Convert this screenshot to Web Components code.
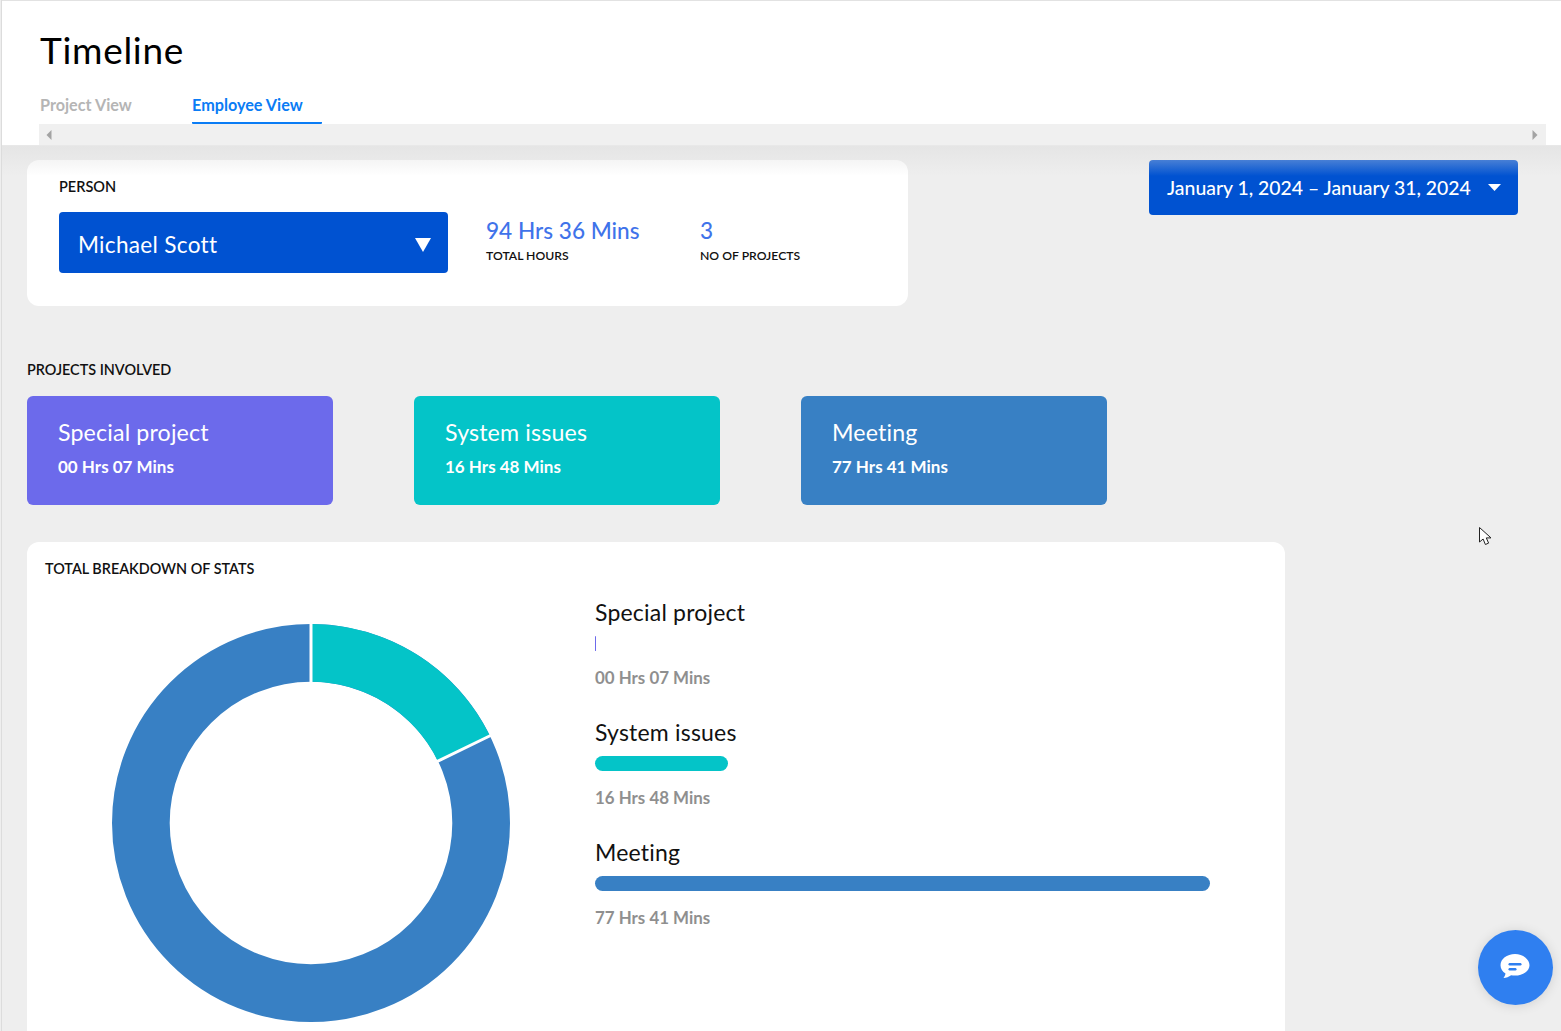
<!DOCTYPE html>
<html><head><meta charset="utf-8"><style>
html,body{margin:0;padding:0;height:1031px;overflow:hidden;background:#eee}
body{font-family:Lato,"Noto Sans",sans-serif;color:#111}
</style></head><body>
<tl-app></tl-app>
<script>
function def(name, html){
  customElements.define(name, class extends HTMLElement{
    constructor(){super();this.attachShadow({mode:'open'}).innerHTML=html(this)}
  });
}
def('tl-header',()=>`<style>
:host{display:block;background:#fff;height:144px;border-top:1px solid #e2e2e2;border-bottom:1px solid #e8e8e8;padding-left:37px;padding-right:15px}
h1{margin:0 0 0 1px;padding-top:26px;height:45px;font:400 37px/45px Lato,sans-serif;letter-spacing:.7px;color:#000}
.tabs{display:flex;margin-top:20px;height:32px;box-sizing:border-box;padding-left:1px}
.tab{font:700 16.2px/26px Lato,sans-serif;height:32px;box-sizing:border-box;white-space:nowrap}
.a{color:#b5b5b5;width:152px}
.b{color:#0a7cf5;border-bottom:2px solid #0a7cf5;width:130px;border-radius:0 0 1px 1px}
.bar{height:21px;background:#f0f0f0;display:flex;justify-content:space-between;align-items:center;padding:0 8px 0 7px}
svg{display:block}
</style><h1>Timeline</h1><div class="tabs"><div class="tab a">Project View</div><div class="tab b">Employee View</div></div>
<div class="bar"><svg width="6" height="10"><path d="M5.500 0v10L.5 5z" fill="#a3a3a3"/></svg><svg width="6" height="10"><path d="M.5 0v10L5.500 5z" fill="#a3a3a3"/></svg></div>`);
def('tl-stat',e=>`<style>
:host{display:block}
.v{font:500 22.6px/28px Lato,sans-serif;color:#3f73ea}
.l{font:600 12.2px/16px Lato,sans-serif;color:#111;margin-top:3px}
</style><div class="v"><slot name="v"></slot></div><div class="l"><slot name="l"></slot></div>`);
def('tl-person',()=>`<style>
:host{display:block;width:881px;height:146px;background:#fff;border-radius:12px;box-sizing:border-box;padding:18px 32px 0;position:relative}
.p{font:600 14.5px/18px Lato,sans-serif;color:#111}
.r{display:flex;margin-top:16px}
.sel{width:389px;height:61px;background:#0052d1;border-radius:4px;color:#fff;display:flex;align-items:center;justify-content:space-between;padding:4px 17px 0 19px;box-sizing:border-box;font:400 22.6px/30px Lato,sans-serif;letter-spacing:.3px}
.st{display:flex;margin-left:38px;padding-top:5px}
tl-stat:first-child{width:214px}
</style><div class="p">PERSON</div><div class="r"><div class="sel"><span>Michael Scott</span><svg width="16" height="15"><path d="M0 1h16L8 15z" fill="#fff"/></svg></div>
<div class="st"><tl-stat><span slot="v">94 Hrs 36 Mins</span><span slot="l">TOTAL HOURS</span></tl-stat><tl-stat><span slot="v">3</span><span slot="l">NO OF PROJECTS</span></tl-stat></div></div>`);
def('tl-date',()=>`<style>
:host{display:flex;width:369px;height:55px;background:#0052d1;border-radius:4px;color:#fff;align-items:center;justify-content:space-between;padding:0 17px 0 18px;box-sizing:border-box;font:500 19.4px/26px Lato,sans-serif;white-space:nowrap}
svg{display:block}
</style><span>January 1, 2024 – January 31, 2024</span><svg width="13" height="7"><path d="M0 0h13L6.500 7z" fill="#fff"/></svg>`);
def('tl-card',e=>`<style>
:host{display:block;width:306px;height:109px;border-radius:6px;color:#fff;background:${e.getAttribute('color')};box-sizing:border-box;padding:22px 31px}
.t{font:400 23.2px/29px Lato,sans-serif;letter-spacing:.15px}
.s{font:700 17px/20px Lato,sans-serif;margin-top:10px}
</style><div class="t">${e.getAttribute('name')}</div><div class="s">${e.getAttribute('time')}</div>`);
def('tl-meter',e=>`<style>
:host{display:block;height:120px}
.t{font:400 23px/28px Lato,sans-serif;color:#111;letter-spacing:.2px}
.track{height:15px;margin-top:10px;display:flex}
.b{height:15px;border-radius:8px;width:${e.getAttribute('w')}px;background:${e.getAttribute('color')}}
.s{font:700 16.9px/20px Lato,sans-serif;color:#8f8f8f;margin-top:17px}
</style><div class="t">${e.getAttribute('name')}</div><div class="track"><div class="b"></div></div><div class="s">${e.getAttribute('time')}</div>`);
def('tl-donut',()=>`<style>:host{display:block;width:398px;height:398px}svg{display:block}</style>
<svg width="398" height="398" viewBox="0 0 400 400">
<circle cx="200" cy="200" r="171" fill="none" stroke="#3880c4" stroke-width="58"/>
<path d="M200 0A200 200 0 0 1 379.8 112.4L327.500 137.900A142 142 0 0 0 200 58Z" fill="#04c4c8"/>
<path d="M200 -2V60M381 111.800L326 138.500" stroke="#fff" stroke-width="3" fill="none"/>
</svg>`);
def('tl-stats',()=>`<style>
:host{display:block;width:1258px;height:560px;background:#fff;border-radius:12px;box-sizing:border-box;padding:17px 18px}
.h{font:600 14.4px/20px Lato,sans-serif;color:#111}
.c{display:flex}
tl-donut{margin:45px 0 0 67px}
.m{margin:19px 0 0 85px;width:615px}
</style><div class="h">TOTAL BREAKDOWN OF STATS</div><div class="c"><tl-donut></tl-donut><div class="m">
<tl-meter name="Special project" time="00 Hrs 07 Mins" w="1" color="#6c6aeb"></tl-meter>
<tl-meter name="System issues" time="16 Hrs 48 Mins" w="133" color="#04c4c8"></tl-meter>
<tl-meter name="Meeting" time="77 Hrs 41 Mins" w="615" color="#3880c4"></tl-meter>
</div></div>`);
def('tl-chat',()=>`<style>
:host{position:fixed;left:1478px;top:930px;width:75px;height:75px;border-radius:50%;background:#2f7ff0;box-shadow:0 1px 12px rgba(0,0,0,.12);display:flex;align-items:center;justify-content:center}
svg{display:block;margin-top:-2px;margin-left:-1px}
</style><svg width="32" height="28" viewBox="0 0 32 28"><path d="M16 1C7.800 1 1.500 6 1.500 12.200c0 3.600 2 6.500 5 8.400-.2 1.700-1.200 3.300-2 4.400 2.700-.2 5.500-1.300 7.600-2.800 1.300.3 2.500.4 3.900.4 8.200 0 14.500-4.800 14.500-10.400S24.200 1 16 1z" fill="#fff"/><rect x="9.500" y="10" width="13" height="2.500" rx="1.200" fill="#2f7ff0"/><rect x="9.500" y="15" width="8" height="2.500" rx="1.200" fill="#2f7ff0"/></svg>`);
def('tl-app',()=>`<style>
:host{display:block;height:1031px;overflow:hidden;position:relative;border-left:1px solid #dcdcdc;margin-left:1px;background:#eee}
main{padding:14px 43px 0 25px}
.top{display:flex;justify-content:space-between;align-items:flex-start}
.lab{font:600 14.4px/20px Lato,sans-serif;color:#111;margin-top:54px}
.cards{display:flex;gap:81px;margin-top:16px}
tl-stats{margin-top:37px}
.shade{position:absolute;left:0;right:0;top:146px;height:30px;background:linear-gradient(#dfdfdf,rgba(238,238,238,0));opacity:.6;pointer-events:none}
.cur{position:absolute;left:1477px;top:527px}
</style><tl-header></tl-header><main>
<div class="top"><tl-person></tl-person><tl-date></tl-date></div>
<div class="lab">PROJECTS INVOLVED</div>
<div class="cards"><tl-card color="#6c6aeb" name="Special project" time="00 Hrs 07 Mins"></tl-card><tl-card color="#04c4c8" name="System issues" time="16 Hrs 48 Mins"></tl-card><tl-card color="#3880c4" name="Meeting" time="77 Hrs 41 Mins"></tl-card></div>
<tl-stats></tl-stats></main><div class="shade"></div>
<svg class="cur" width="14" height="20" viewBox="0 0 14 20"><path d="M.5.500V15l3.600-3 2.300 5.500 3.200-1.400-2.300-5.200h4.700z" fill="#fff" stroke="#222" stroke-width="1"/></svg>
<tl-chat></tl-chat>`);
</script></body></html>
